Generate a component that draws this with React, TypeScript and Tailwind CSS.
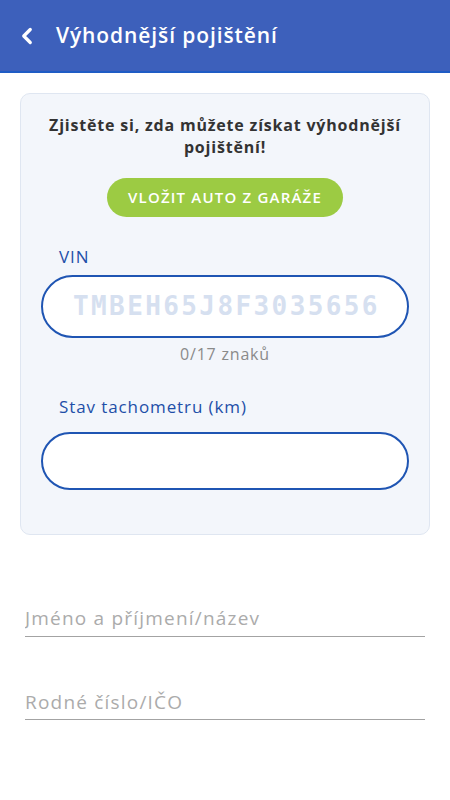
import { ChevronLeft } from 'lucide-react'

const font = { fontFamily: '"Open Sans", "Noto Sans", sans-serif' }

function UnderlineField({ placeholder }: { placeholder: string }) {
  return (
    <div className="border-b border-[#a3a3a3] pb-[3px]">
      <input
        placeholder={placeholder}
        className="w-full bg-transparent text-[19px] tracking-[1.2px] text-[#333] placeholder-[#ababab] outline-none"
      />
    </div>
  )
}

export default function App() {
  return (
    <div className="min-h-[800px] w-[450px] bg-white" style={font}>
      <header className="flex h-[73px] items-center gap-[16px] border-b-2 border-[#1f5cc5] bg-[#3d60bb] pl-[14px] text-white">
        <ChevronLeft size={26} strokeWidth={3} />
        <h1 className="text-[21px] font-semibold tracking-[0.9px]">Výhodnější pojištění</h1>
      </header>

      <div className="mx-[20px] mt-[20px] rounded-[10px] border border-[#dfe6f1] bg-[#f3f6fb] px-[20px] pb-[44px] pt-[20px]">
        <p className="text-center text-[16px] font-bold leading-[22px] tracking-[0.8px] text-[#333]">
          Zjistěte si, zda můžete získat výhodnější pojištění!
        </p>
        <div className="mt-[20px] flex justify-center">
          <button className="h-[39px] w-[236px] rounded-full bg-[#9ccb43] text-[15px] font-semibold tracking-[1.2px] text-white">
            VLOŽIT AUTO Z GARÁŽE
          </button>
        </div>

        <label className="mt-[27px] block pl-[18px] text-[17px] font-medium tracking-[0.9px] text-[#1e4fa8]">VIN</label>
        <input
          placeholder="TMBEH65J8F3035656"
          className="mt-[5px] h-[63px] w-full rounded-full border-2 border-[#1f55b3] bg-white px-[30px] text-center text-[26px] font-bold tracking-[2.4px] text-[#333] placeholder-[#d6e0f0] outline-none"
          style={{ fontFamily: '"DejaVu Sans Mono", "Liberation Mono", monospace' }}
        />
        <p className="mt-[4px] text-center text-[16px] tracking-[0.8px] text-[#8a8a8a]">0/17 znaků</p>

        <label className="mt-[28px] block pl-[18px] text-[17px] font-medium tracking-[0.9px] text-[#1e4fa8]">
          Stav tachometru (km)
        </label>
        <input className="mt-[13px] h-[58px] w-full rounded-full border-2 border-[#1f55b3] bg-white px-[30px] text-[18px] outline-none" />
      </div>

      <div className="mx-[25px] mt-[69px] flex flex-col gap-[51px]">
        <UnderlineField placeholder="Jméno a příjmení/název" />
        <UnderlineField placeholder="Rodné číslo/IČO" />
      </div>
    </div>
  )
}
